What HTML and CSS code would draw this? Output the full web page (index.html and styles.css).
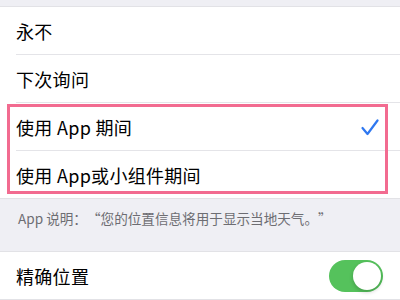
FILE: index.html
```html
<!DOCTYPE html>
<html lang="zh-CN">
<head>
  <meta charset="UTF-8">
  <title>位置</title>
  <link rel="stylesheet" href="styles.css">
</head>
<body>

  <!-- 允许访问位置信息 -->
  <div class="group">
    <div class="row"><span class="label">永不</span></div>
    <div class="row"><span class="label">下次询问</span></div>
    <div class="marked">
      <div class="row">
        <span class="label">使用 App 期间</span>
        <svg class="check" width="18" height="17" viewBox="0 0 18 17">
          <polyline points="1.5,9 6.5,15 16.5,1.5" fill="none" stroke="#2f78f0" stroke-width="2.2" stroke-linecap="round" stroke-linejoin="round"/>
        </svg>
      </div>
      <div class="row last"><span class="label">使用 App或小组件期间</span></div>
    </div>
  </div>

  <p class="note">App 说明：<span class="q open">“</span>您的位置信息将用于显示当地天气。<span class="q close">”</span></p>

  <div class="group">
    <div class="row last">
      <span class="label">精确位置</span>
      <span class="toggle on"><span class="knob"></span></span>
    </div>
  </div>

</body>
</html>
```

FILE: styles.css
```css
body {
  margin: 0;
  padding-top: 6px;
  background: #efeff4;
  font-family: "Noto Sans CJK SC", "Liberation Sans", sans-serif;
  color: #000;
}

.group {
  background: #fff;
  border-top: 1px solid #e2e2e6;
  border-bottom: 1px solid #e2e2e6;
  padding-left: 16px;
}

.row {
  height: 47px;
  display: flex;
  align-items: center;
  justify-content: space-between;
  padding-right: 21px;
  border-bottom: 1px solid #e4e4e8;
}

.row.last {
  border-bottom: none;
}

.label {
  font-size: 18px;
  letter-spacing: 0.3px;
}

.check {
  display: block;
  margin-top: 2px;
}

/* 标注框 */
.marked {
  position: relative;
}
.marked::after {
  content: '';
  position: absolute;
  left: -9px;
  top: 1px;
  right: 12px;
  bottom: 4px;
  border: 3px solid #f26b90;
  pointer-events: none;
}

.note {
  margin: 0;
  padding: 9px 18px 0;
  height: 43px;
  font-size: 13.6px;
  color: #6d6d72;
}
/* 全角引号 */
.note .q {
  display: inline-block;
  width: 1em;
}
.note .q.open {
  text-align: right;
}
.note .q.close {
  text-align: left;
}

.toggle {
  position: relative;
  width: 54px;
  height: 32px;
  border-radius: 16px;
  background: #e5e5ea;
  margin-right: -4px;
}
.toggle.on {
  background: #55c25c;
}
.toggle .knob {
  position: absolute;
  top: 2px;
  right: 2px;
  width: 28px;
  height: 28px;
  border-radius: 50%;
  background: #fff;
  box-shadow: 0 2px 4px rgba(0,0,0,0.2);
}
```
